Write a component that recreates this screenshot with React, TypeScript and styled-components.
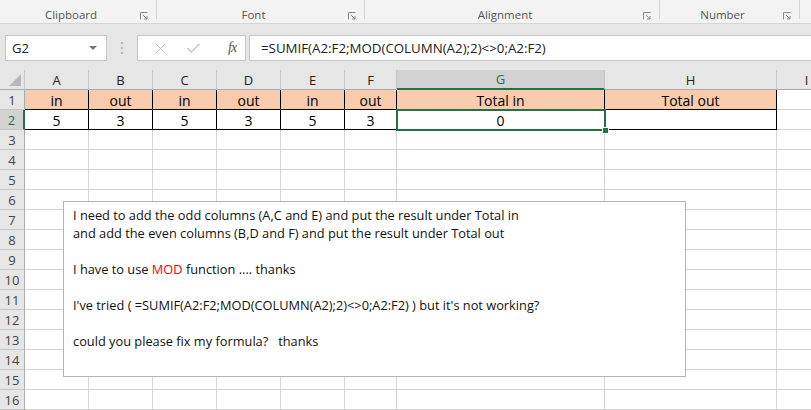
import React from 'react';
import styled, { createGlobalStyle } from 'styled-components';
import { X, Check } from 'lucide-react';

const GlobalStyle = createGlobalStyle`
	body {
		margin: 0;
		background: #ffffff;
		overflow: hidden;
		font-family: 'Open Sans', 'Noto Sans', sans-serif;
	}
`;

const Page = styled.div`
	width: 811px;
	height: 410px;
	display: flex;
	flex-direction: column;
	overflow: hidden;
	position: relative;
`;

const Ribbon = styled.div`
	height: 24px;
	display: flex;
	background: #f3f3f3;
	border-bottom: 1px solid #d5d5d5;
	box-sizing: border-box;
`;

const Group = styled.div<{ $w: number }>`
	width: ${({ $w }) => $w}px;
	flex: none;
	display: flex;
	align-items: flex-end;
	position: relative;
	box-sizing: border-box;
	padding-bottom: 0;
	&::after {
		content: '';
		position: absolute;
		right: 0;
		top: 0;
		bottom: 4px;
		width: 1px;
		background: #d5d5d5;
	}
`;

const GroupLabel = styled.div`
	flex: 1;
	text-align: center;
	font-size: 11.5px;
	color: #555555;
	line-height: 16px;
	padding-left: 6px;
`;

const Launcher = styled.svg`
	width: 8px;
	height: 8px;
	margin: 0 9px 3px 4px;
	flex: none;
`;

const FormulaBar = styled.div`
	height: 46px;
	background: #e6e6e6;
	display: flex;
	align-items: flex-start;
	padding: 11px 0 0 5px;
	box-sizing: border-box;
`;

const NameBox = styled.div`
	width: 102px;
	height: 26px;
	box-sizing: border-box;
	background: #ffffff;
	border: 1px solid #c6c6c6;
	display: flex;
	align-items: center;
	justify-content: space-between;
	padding: 0 6px 0 6px;
	font-size: 13px;
	color: #222;
`;

const Caret = styled.span`
	width: 0;
	height: 0;
	border-left: 4px solid transparent;
	border-right: 4px solid transparent;
	border-top: 4px solid #777;
	margin-right: 3px;
`;

const Dots = styled.div`
	width: 30px;
	display: flex;
	flex-direction: column;
	align-items: center;
	gap: 3px;
	padding-top: 7px;
	span {
		width: 2px;
		height: 2px;
		background: #b5b5b5;
	}
`;

const ButtonBox = styled.div`
	width: 109px;
	height: 26px;
	box-sizing: border-box;
	background: #ffffff;
	border: 1px solid #c6c6c6;
	display: flex;
	align-items: center;
	padding: 0 0 0 14px;
	gap: 16px;
`;

const Fx = styled.span`
	font-family: 'Liberation Serif', serif;
	font-style: italic;
	font-size: 14px;
	color: #555;
	margin-left: 10px;
	letter-spacing: -1px;
`;

const FormulaInput = styled.div`
	flex: 1;
	height: 26px;
	margin-left: 3px;
	box-sizing: border-box;
	background: #ffffff;
	border: 1px solid #c6c6c6;
	border-right: none;
	display: flex;
	align-items: center;
	padding-left: 11px;
	font-size: 13.3px;
	color: #222;
`;

const COLS = [25, 64, 64, 64, 64, 64, 52, 208, 172, 60];

const Sheet = styled.div`
	flex: 1;
	display: grid;
	grid-template-columns: ${COLS.map((c) => `${c}px`).join(' ')};
	grid-auto-rows: 20px;
	position: relative;
	background: #ffffff;
`;

const HeadCell = styled.div<{ $sel?: boolean }>`
	box-sizing: border-box;
	background: ${({ $sel }) => ($sel ? '#d2d2d2' : '#e6e6e6')};
	color: ${({ $sel }) => ($sel ? '#217346' : '#222')};
	border-right: 1px solid #c6c6c6;
	border-bottom: ${({ $sel }) => ($sel ? '2px solid #217346' : '1px solid #ababab')};
	display: flex;
	align-items: center;
	justify-content: center;
	font-size: 13px;
`;

const Corner = styled(HeadCell)`
	position: relative;
	&::after {
		content: '';
		position: absolute;
		right: 3px;
		bottom: 3px;
		border-left: 12px solid transparent;
		border-bottom: 12px solid #b8b8b8;
	}
`;

const RowHead = styled.div<{ $sel?: boolean }>`
	box-sizing: border-box;
	background: ${({ $sel }) => ($sel ? '#d2d2d2' : '#e6e6e6')};
	color: ${({ $sel }) => ($sel ? '#217346' : '#444')};
	border-bottom: 1px solid #c6c6c6;
	border-right: ${({ $sel }) => ($sel ? '2px solid #217346' : '1px solid #ababab')};
	display: flex;
	align-items: center;
	justify-content: center;
	font-size: 13px;
`;

const Cell = styled.div<{ $fill?: boolean; $boxed?: boolean }>`
	box-sizing: border-box;
	background: ${({ $fill }) => ($fill ? '#f8cbad' : '#ffffff')};
	border-right: 1px solid ${({ $boxed }) => ($boxed ? '#000' : '#d4d4d4')};
	border-bottom: 1px solid ${({ $boxed }) => ($boxed ? '#000' : '#d4d4d4')};
	display: flex;
	align-items: center;
	justify-content: center;
	font-size: 14px;
	color: #000;
	padding-top: 1px;
`;

const Selection = styled.div`
	position: absolute;
	left: 396px;
	top: 39px;
	width: 210px;
	height: 22px;
	border: 2px solid #217346;
	box-sizing: border-box;
	pointer-events: none;
	&::after {
		content: '';
		position: absolute;
		right: -5px;
		bottom: -5px;
		width: 5px;
		height: 5px;
		background: #217346;
		border: 1px solid #fff;
	}
`;

const Comment = styled.div`
	position: absolute;
	left: 63px;
	top: 131px;
	width: 623px;
	height: 176px;
	box-sizing: border-box;
	background: #ffffff;
	border: 1px solid #b4b4b4;
	padding: 4px 9px;
	font-size: 12.8px;
	line-height: 18px;
	color: #111;
`;

const Line = styled.div`
	min-height: 18px;
	white-space: pre;
`;

const Red = styled.span`
	color: #ff0000;
`;

const LauncherIcon = () => (
	<Launcher viewBox="0 0 8 8">
		<path d="M0.5 7.5V0.5H7.5" fill="none" stroke="#8a8a8a" strokeWidth="1" />
		<path d="M3 3L7 7M7 4V7H4" fill="none" stroke="#8a8a8a" strokeWidth="1" />
	</Launcher>
);

const groups = [
	{ label: 'Clipboard', w: 157 },
	{ label: 'Font', w: 208 },
	{ label: 'Alignment', w: 295 },
	{ label: 'Number', w: 140 },
];

const letters = ['A', 'B', 'C', 'D', 'E', 'F', 'G', 'H', 'I'];
const row1 = ['in', 'out', 'in', 'out', 'in', 'out', 'Total in', 'Total out'];
const row2 = ['5', '3', '5', '3', '5', '3', '0', ''];

const App = () => (
	<Page>
		<GlobalStyle />
		<Ribbon>
			{groups.map((g) => (
				<Group key={g.label} $w={g.w}>
					<GroupLabel>{g.label}</GroupLabel>
					<LauncherIcon />
				</Group>
			))}
		</Ribbon>
		<FormulaBar>
			<NameBox>
				G2
				<Caret />
			</NameBox>
			<Dots>
				<span />
				<span />
				<span />
			</Dots>
			<ButtonBox>
				<X size={17} strokeWidth={1.3} color="#bdbdbd" />
				<Check size={17} strokeWidth={1.6} color="#bdbdbd" />
				<Fx>fx</Fx>
			</ButtonBox>
			<FormulaInput>=SUMIF(A2:F2;MOD(COLUMN(A2);2)&lt;&gt;0;A2:F2)</FormulaInput>
		</FormulaBar>
		<Sheet>
			<Corner />
			{letters.map((l) => (
				<HeadCell key={l} $sel={l === 'G'}>
					{l}
				</HeadCell>
			))}
			<RowHead>1</RowHead>
			{row1.map((v, i) => (
				<Cell key={`r1${i}`} $fill $boxed>
					{v}
				</Cell>
			))}
			<Cell />
			<RowHead $sel>2</RowHead>
			{row2.map((v, i) => (
				<Cell key={`r2${i}`} $boxed>
					{v}
				</Cell>
			))}
			<Cell />
			{Array.from({ length: 14 }, (_, r) => (
				<React.Fragment key={r}>
					<RowHead>{r + 3}</RowHead>
					{letters.map((l) => (
						<Cell key={l} />
					))}
				</React.Fragment>
			))}
			<Selection />
			<Comment>
				<Line>I need to add the odd columns (A,C and E) and put the result under Total in</Line>
				<Line>and add the even columns (B,D and F) and put the result under Total out</Line>
				<Line> </Line>
				<Line>
					I have to use <Red>MOD</Red> function .... thanks
				</Line>
				<Line> </Line>
				<Line>I've tried ( =SUMIF(A2:F2;MOD(COLUMN(A2);2)&lt;&gt;0;A2:F2) ) but it's not working?</Line>
				<Line> </Line>
				<Line>could you please fix my formula?   thanks</Line>
			</Comment>
		</Sheet>
	</Page>
);

export default App;
